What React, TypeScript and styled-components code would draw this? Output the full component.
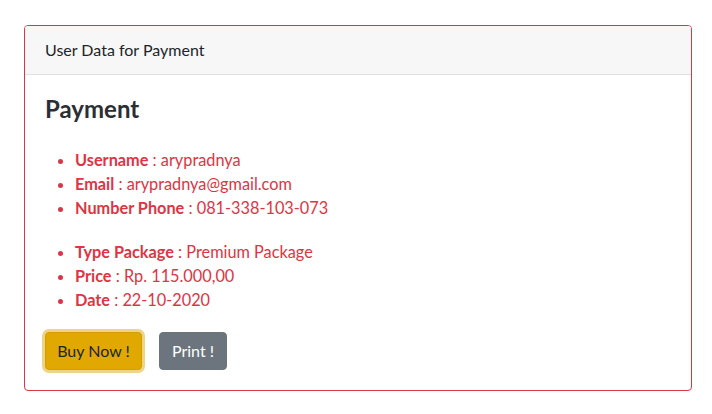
import React from "react";
import styled, { createGlobalStyle } from "styled-components";

const Global = createGlobalStyle`
  html, body { margin: 0; padding: 0; background: #ffffff; }
  body {
    font-family: "Segoe UI", Lato, "Liberation Sans", sans-serif;
    font-size: 16px;
    line-height: 1.5;
    color: #212529;
  }
  * { box-sizing: border-box; }
`;

const Page = styled.div`
  padding: 25px 20px 0 24px;
`;

const Card = styled.section`
  width: 668px;
  border: 1px solid #dc3545;
  border-radius: 4px;
  background: #fff;
  overflow: hidden;
`;

const CardHeader = styled.header`
  padding: 12px 20px;
  background: #f7f7f7;
  border-bottom: 1px solid #dfdfdf;
  line-height: 24px;
  font-size: 16px;
  color: #212529;
`;

const CardBody = styled.div`
  padding: 20px;
`;

const Title = styled.h3`
  margin: 0 0 24px;
  font-size: 24px;
  font-weight: 700;
  line-height: 1.2;
  color: #2b2f33;
`;

const List = styled.ul<{ $gap: number }>`
  margin: 0 0 ${(p) => p.$gap}px;
  padding-left: 30px;
  color: #dc3545;
  font-size: 16.3px;
  line-height: 24px;
`;

const Label = styled.strong`
  font-weight: 700;
`;

const Actions = styled.div`
  display: flex;
  gap: 17px;
`;

const Button = styled.button<{ $variant: "warning" | "secondary"; $w: number }>`
  width: ${(p) => p.$w}px;
  height: 38px;
  padding: 0;
  white-space: nowrap;
  text-align: center;
  font-family: inherit;
  font-size: 16px;
  line-height: 24px;
  border-radius: 4px;
  border: 1px solid ${(p) => (p.$variant === "warning" ? "#d39e00" : "#6c757d")};
  background: ${(p) => (p.$variant === "warning" ? "#e0a800" : "#6c757d")};
  color: ${(p) => (p.$variant === "warning" ? "#212529" : "#ffffff")};
  box-shadow: ${(p) => (p.$variant === "warning" ? "0 0 0 3px rgba(222,170,12,0.5)" : "none")};
  cursor: pointer;
`;

const Item = ({ label, value }: { label: string; value: string }) => (
  <li>
    <Label>{label}</Label> : {value}
  </li>
);

export default function App() {
  return (
    <Page>
      <Global />
      <Card>
        <CardHeader>User Data for Payment</CardHeader>
        <CardBody>
          <Title>Payment</Title>
          <List $gap={20}>
            <Item label="Username" value="arypradnya" />
            <Item label="Email" value="arypradnya@gmail.com" />
            <Item label="Number Phone" value="081-338-103-073" />
          </List>
          <List $gap={20}>
            <Item label="Type Package" value="Premium Package" />
            <Item label="Price" value="Rp. 115.000,00" />
            <Item label="Date" value="22-10-2020" />
          </List>
          <Actions>
            <Button $variant="warning" $w={97}>Buy Now !</Button>
            <Button $variant="secondary" $w={68}>Print !</Button>
          </Actions>
        </CardBody>
      </Card>
    </Page>
  );
}
